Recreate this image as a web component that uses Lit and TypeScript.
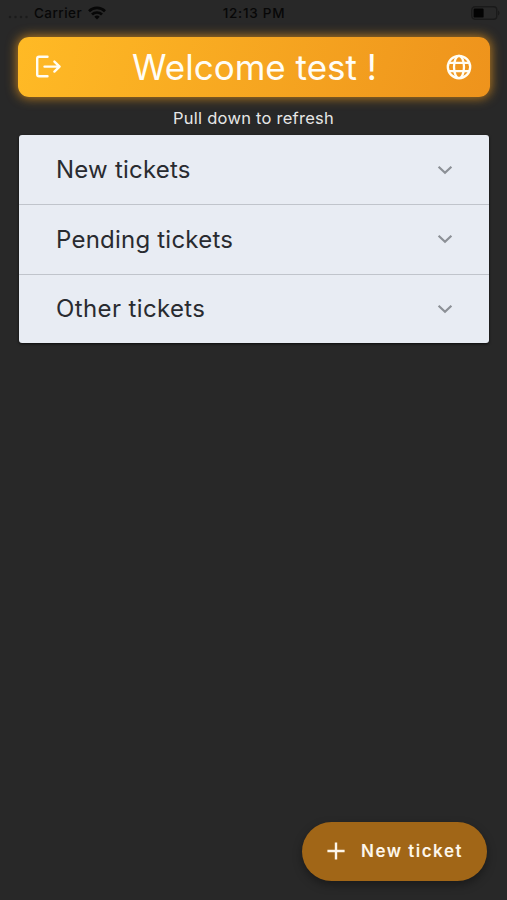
import { LitElement, html, css } from "lit";
import { customElement } from "lit/decorators.js";

@customElement("app-root")
export class AppRoot extends LitElement {
  static styles = css`
    :host {
      display: flex;
      flex-direction: column;
      position: relative;
      box-sizing: border-box;
      width: 100%;
      height: 100vh;
      overflow: hidden;
      background: #282828;
      font-family: Inter, "Liberation Sans", sans-serif;
    }
    svg { display: block; flex: none; }
    .status {
      display: grid;
      grid-template-columns: 1fr auto 1fr;
      align-items: center;
      height: 26px;
      padding: 0 7px 0 8px;
      color: #070707;
      font-size: 13.5px;
      font-weight: 500;
      white-space: nowrap;
    }
    .carrier { display: flex; align-items: center; letter-spacing: 0.45px; }
    .time { letter-spacing: 0.75px; }
    .dots { margin: 8px 5px 0 0; }
    .wifi { margin-left: 6px; }
    .battery { justify-self: end; }
    .header {
      display: flex;
      align-items: center;
      justify-content: space-between;
      box-sizing: border-box;
      height: 60px;
      margin: 11px 17px 0 18px;
      padding: 0 17px 0 14px;
      border-radius: 11px;
      background: linear-gradient(105deg, #ffba25, #ee931c);
      box-shadow: 0 0 11px 1px rgba(250, 160, 25, 0.7);
      color: #fffdf6;
    }
    .title { font-size: 35px; font-weight: 400; line-height: 60px; white-space: nowrap; }
    .hint {
      margin-top: 10px;
      text-align: center;
      color: #e6e6e6;
      font-size: 16.5px;
      letter-spacing: 0.25px;
      line-height: 22px;
    }
    .list {
      margin: 6px 18px 0 19px;
      border-radius: 3px;
      background: #e8ecf3;
      box-shadow: 0 1px 3px rgba(0, 0, 0, 0.7);
    }
    .row {
      display: flex;
      align-items: center;
      justify-content: space-between;
      box-sizing: border-box;
      height: 69px;
      padding: 0 35px 0 37px;
      color: #292b30;
      font-size: 24px;
      letter-spacing: 0.22px;
    }
    .row + .row { height: 69.5px; border-top: 1px solid #c0c4cb; }
    .row:last-child { letter-spacing: 0.38px; }
    .fab {
      position: absolute;
      right: 20px;
      bottom: 19px;
      display: flex;
      align-items: center;
      box-sizing: border-box;
      width: 185px;
      height: 59px;
      padding: 0 0 1px 24px;
      border-radius: 30px;
      background: #a16617;
      box-shadow: 0 4px 10px rgba(0, 0, 0, 0.35);
      color: #fdf6ea;
      font-size: 17px;
      font-weight: 600;
      letter-spacing: 1.5px;
      white-space: nowrap;
    }
    .label { margin-left: 15px; }
  `;

  render() {
    return html`
      <div class="status">
        <div class="carrier">
          <svg class="dots" width="21" height="4" viewBox="0 0 21 4" fill="#1b1b1b">
            <circle cx="2" cy="2" r="1.2" /><circle cx="7.5" cy="2" r="1.2" />
            <circle cx="13" cy="2" r="1.2" /><circle cx="18.5" cy="2" r="1.2" />
          </svg>
          <span class="network">Carrier</span>
          <svg class="wifi" width="18" height="14" viewBox="0 0 18 14" fill="none" stroke="#070707" stroke-width="2.7">
            <path d="M1 5.2a11.5 11.5 0 0 1 16 0" />
            <path d="M4 8.5a7.2 7.2 0 0 1 10 0" />
            <path d="M9 13.5l-2.7-2.8a3.9 3.9 0 0 1 5.4 0z" fill="#070707" stroke="none" />
          </svg>
        </div>
        <span class="time">12:13 PM</span>
        <svg class="battery" width="29" height="14" viewBox="0 0 29 14">
          <rect x="0.8" y="0.8" width="25" height="12.4" rx="3.2" fill="none" stroke="#1a1a1a" stroke-width="1.4" />
          <rect x="2.6" y="2.6" width="10" height="9" rx="1.2" fill="#030303" />
          <path d="M27 4.5c2 .8 2 4.2 0 5z" fill="#1a1a1a" />
        </svg>
      </div>
      <header class="header">
        <svg width="32" height="32" viewBox="0 0 32 32" fill="none" stroke="#fffdf4" stroke-width="2.4" stroke-linecap="round" stroke-linejoin="round">
          <path d="M15.5 5.7H7a1.8 1.8 0 0 0-1.8 1.8v16a1.8 1.8 0 0 0 1.8 1.8h8.5" />
          <path d="M12.5 15.6h15.1M22.4 10.6l5.2 5-5.2 5" />
        </svg>
        <span class="title">Welcome test !</span>
        <svg width="28" height="28" viewBox="0 0 28 28" fill="none" stroke="#fffdf4" stroke-width="2.3">
          <circle cx="14" cy="14" r="11.2" />
          <ellipse cx="14" cy="14" rx="5" ry="11.2" />
          <path d="M3.6 9.8h20.8M3.6 18.2h20.8" />
        </svg>
      </header>
      <div class="hint"><span class="pull">Pull down to refresh</span></div>
      <div class="list">
        ${["New tickets", "Pending tickets", "Other tickets"].map(
          (name) => html`<div class="row">
            <span class="name">${name}</span>
            <svg width="18" height="12" viewBox="0 0 18 12" fill="none" stroke="#8c9096" stroke-width="2.2">
              <path d="M2.6 2.7L9 8.8l6.4-6.1" />
            </svg>
          </div>`
        )}
      </div>
      <div class="fab">
        <svg width="20" height="20" viewBox="0 0 20 20" stroke="#fdf6ea" stroke-width="2.4">
          <path d="M10 1.4v17.2M1.4 10h17.2" />
        </svg>
        <span class="label">New ticket</span>
      </div>
    `;
  }
}
